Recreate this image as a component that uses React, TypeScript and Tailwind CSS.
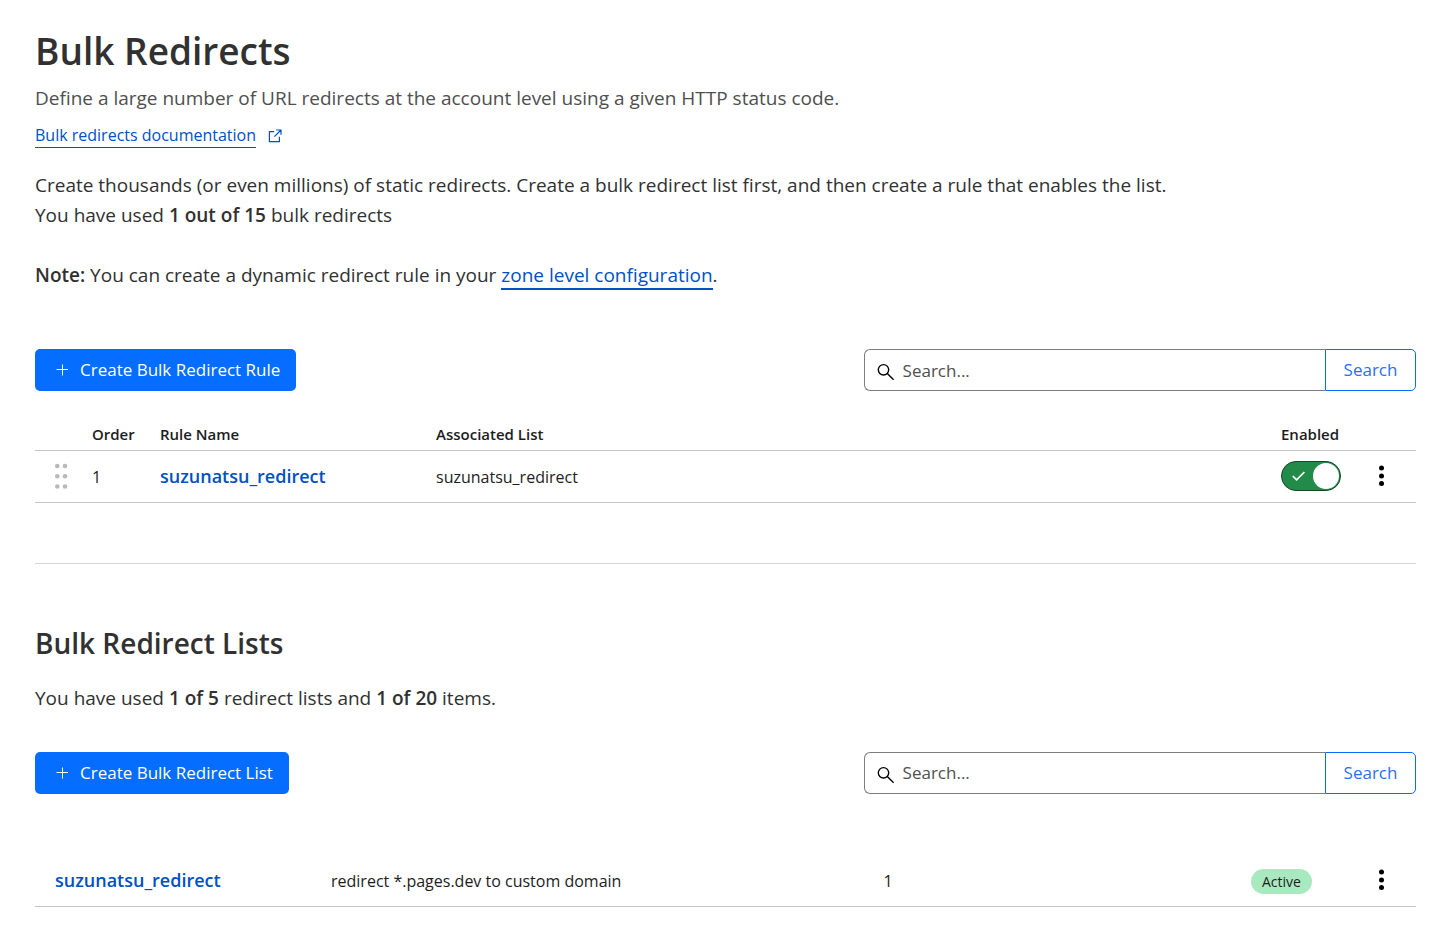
import { useState } from "react";

function PlusIcon() {
  return (
    <svg width="12" height="12" viewBox="0 0 12 12" fill="none" stroke="currentColor" strokeWidth="1" aria-hidden="true">
      <path d="M6.5 0.5v11M0.5 5.5h12" />
    </svg>
  );
}

function ExternalIcon() {
  return (
    <svg width="14" height="14" viewBox="0 0 14 14" fill="none" stroke="currentColor" strokeWidth="1.2" aria-hidden="true">
      <path d="M6.2 2.6H1.4v10h10V7.8M8.2 1h4.8v4.8M13 1L6.4 7.6" />
    </svg>
  );
}

function SearchIcon() {
  return (
    <svg width="18" height="18" viewBox="0 0 18 18" fill="none" stroke="#000" strokeWidth="1.4" aria-hidden="true">
      <circle cx="6.5" cy="6.8" r="5.2" />
      <path d="M10.3 10.5l6.3 6.2" />
    </svg>
  );
}

function MoreIcon() {
  return (
    <svg width="6" height="22" viewBox="0 0 6 22" fill="#000" aria-hidden="true">
      <circle cx="2.5" cy="3" r="2.5" />
      <circle cx="2.5" cy="11" r="2.5" />
      <circle cx="2.5" cy="18.6" r="2.5" />
    </svg>
  );
}

function DragIcon() {
  return (
    <svg width="14" height="26" viewBox="0 0 14 26" fill="#b9b9b9" aria-hidden="true">
      {[3, 13.3, 23.5].map((y) => (
        <g key={y}>
          <circle cx="3.3" cy={y} r="2.3" />
          <circle cx="11" cy={y} r="2.3" />
        </g>
      ))}
    </svg>
  );
}

function MoreButton({ label }: { label: string }) {
  return (
    <button type="button" aria-label={label} className="flex h-8 w-[26px] items-center justify-center">
      <MoreIcon />
    </button>
  );
}

function Toolbar({ action, searchId, searchLabel }: { action: string; searchId: string; searchLabel: string }) {
  return (
    <div className="flex items-center justify-between gap-6">
      <button
        type="button"
        className="flex h-[42px] shrink-0 items-center gap-3 rounded-[5px] bg-[#056dff] pr-4 pl-[21px] text-[17px] whitespace-nowrap text-white"
      >
        <PlusIcon />
        {action}
      </button>
      <form role="search" className="flex w-2/5 text-[17px]" onSubmit={(e) => e.preventDefault()}>
        <label htmlFor={searchId} className="flex h-[42px] items-center rounded-l-md border border-r-0 border-[#7d7d7d] pt-1 pl-3">
          <SearchIcon />
        </label>
        <input
          id={searchId}
          type="text"
          aria-label={searchLabel}
          placeholder="Search..."
          className="h-[42px] min-w-0 flex-1 border-y border-[#7d7d7d] pl-2 placeholder:text-[#4f4f4f] focus:outline-none"
        />
        <button type="submit" className="h-[42px] w-[91px] rounded-r-[5px] border border-[#056dff] text-[#2c6ff5]">
          Search
        </button>
      </form>
    </div>
  );
}

export default function App() {
  const [enabled, setEnabled] = useState(true);
  return (
    <main className="bg-white pt-6 pr-[34px] pb-8 pl-[35px] font-['Open_Sans',sans-serif] text-[19px] leading-[30px] text-[#313131]">
      <h1 className="text-[37px] leading-[54px] font-semibold">Bulk Redirects</h1>
      <p className="mt-[5px] text-[#4f4f4f]">Define a large number of URL redirects at the account level using a given HTTP status code.</p>
      <div className="mt-[10px] flex items-center">
        <a href="#documentation" className="flex items-center gap-3 text-[16px] leading-6 text-[#0051c3]">
          <span className="border-b border-[#0051c3]">Bulk redirects documentation</span>
          <ExternalIcon />
        </a>
      </div>
      <p className="mt-[22px]">
        Create thousands (or even millions) of static redirects. Create a bulk redirect list first, and then create a rule that enables the list.
        <br />
        You have used <strong className="font-semibold">1 out of 15</strong> bulk redirects
      </p>
      <p className="mt-[30px] mb-[59px]">
        <strong className="font-semibold">Note:</strong> You can create a dynamic redirect rule in your{" "}
        <a href="#zone" className="border-b-2 border-[#0051c3] text-[#0051c3]">zone level configuration</a>.
      </p>

      <Toolbar action="Create Bulk Redirect Rule" searchId="rule-search" searchLabel="Search rules" />
      <table className="mt-[27px] w-full table-fixed text-left text-[16px] text-[#1d1d1d]">
        <colgroup>
          <col className="w-[57px]" />
          <col className="w-[68px]" />
          <col className="w-[276px]" />
          <col />
          <col className="w-[88px]" />
          <col className="w-[47px]" />
        </colgroup>
        <thead className="text-[15px]">
          <tr className="h-8 border-b border-[#c6c6c6]">
            <td />
            <th scope="col" className="font-semibold">Order</th>
            <th scope="col" className="font-semibold">Rule Name</th>
            <th scope="col" className="font-semibold">Associated List</th>
            <th scope="col" className="font-semibold">Enabled</th>
            <td />
          </tr>
        </thead>
        <tbody>
          <tr className="h-[52px] border-b border-[#c6c6c6]">
            <td>
              <button type="button" aria-label="Reorder rule" className="ml-[19px] flex">
                <DragIcon />
              </button>
            </td>
            <td className="pt-0.5">1</td>
            <td>
              <a href="#rule" className="text-[18px] font-semibold text-[#0051c3]">suzunatsu_redirect</a>
            </td>
            <td className="pt-0.5">suzunatsu_redirect</td>
            <td>
              <button
                type="button"
                role="switch"
                aria-checked={enabled}
                aria-label="Enabled"
                onClick={() => setEnabled(!enabled)}
                className={
                  "flex h-[30px] w-[60px] items-center justify-between rounded-full border border-[#17452a] pr-px pl-2.5 " +
                  (enabled ? "bg-[#228b49]" : "flex-row-reverse bg-gray-500")
                }
              >
                <svg width="14" height="12" viewBox="0 0 14 12" fill="none" stroke="#fff" strokeWidth="1.7" aria-hidden="true">
                  <path d="M0.8 6l3.8 3.8L12.4 2" />
                </svg>
                <span className="size-[26px] rounded-full bg-white" />
              </button>
            </td>
            <td>
              <MoreButton label="Rule actions" />
            </td>
          </tr>
        </tbody>
      </table>

      <hr className="mt-[60px] border-[#d5d5d5]" />

      <h2 className="mt-[59px] text-[28px] leading-10 font-semibold">Bulk Redirect Lists</h2>
      <p className="mt-5 mb-[39px]">
        You have used <strong className="font-semibold">1 of 5</strong> redirect lists and{" "}
        <strong className="font-semibold">1 of 20</strong> items.
      </p>

      <Toolbar action="Create Bulk Redirect List" searchId="list-search" searchLabel="Search lists" />
      <table className="mt-[60px] w-full table-fixed text-left text-[16px] text-[#1d1d1d]">
        <colgroup>
          <col className="w-[296px]" />
          <col className="w-2/5" />
          <col />
          <col className="w-[118px]" />
          <col className="w-[47px]" />
        </colgroup>
        <tbody>
          <tr className="h-[53px] border-b border-[#c6c6c6]">
            <td className="pt-0.5 pl-5">
              <a href="#list" className="text-[18px] font-semibold text-[#0051c3]">suzunatsu_redirect</a>
            </td>
            <td className="pt-0.5">redirect *.pages.dev to custom domain</td>
            <td className="pt-0.5">1</td>
            <td className="pt-0.5">
              <span className="inline-block rounded-full bg-[#a8e9c0] px-[11px] text-[14px] leading-[25px]">Active</span>
            </td>
            <td>
              <MoreButton label="List actions" />
            </td>
          </tr>
        </tbody>
      </table>
    </main>
  );
}
